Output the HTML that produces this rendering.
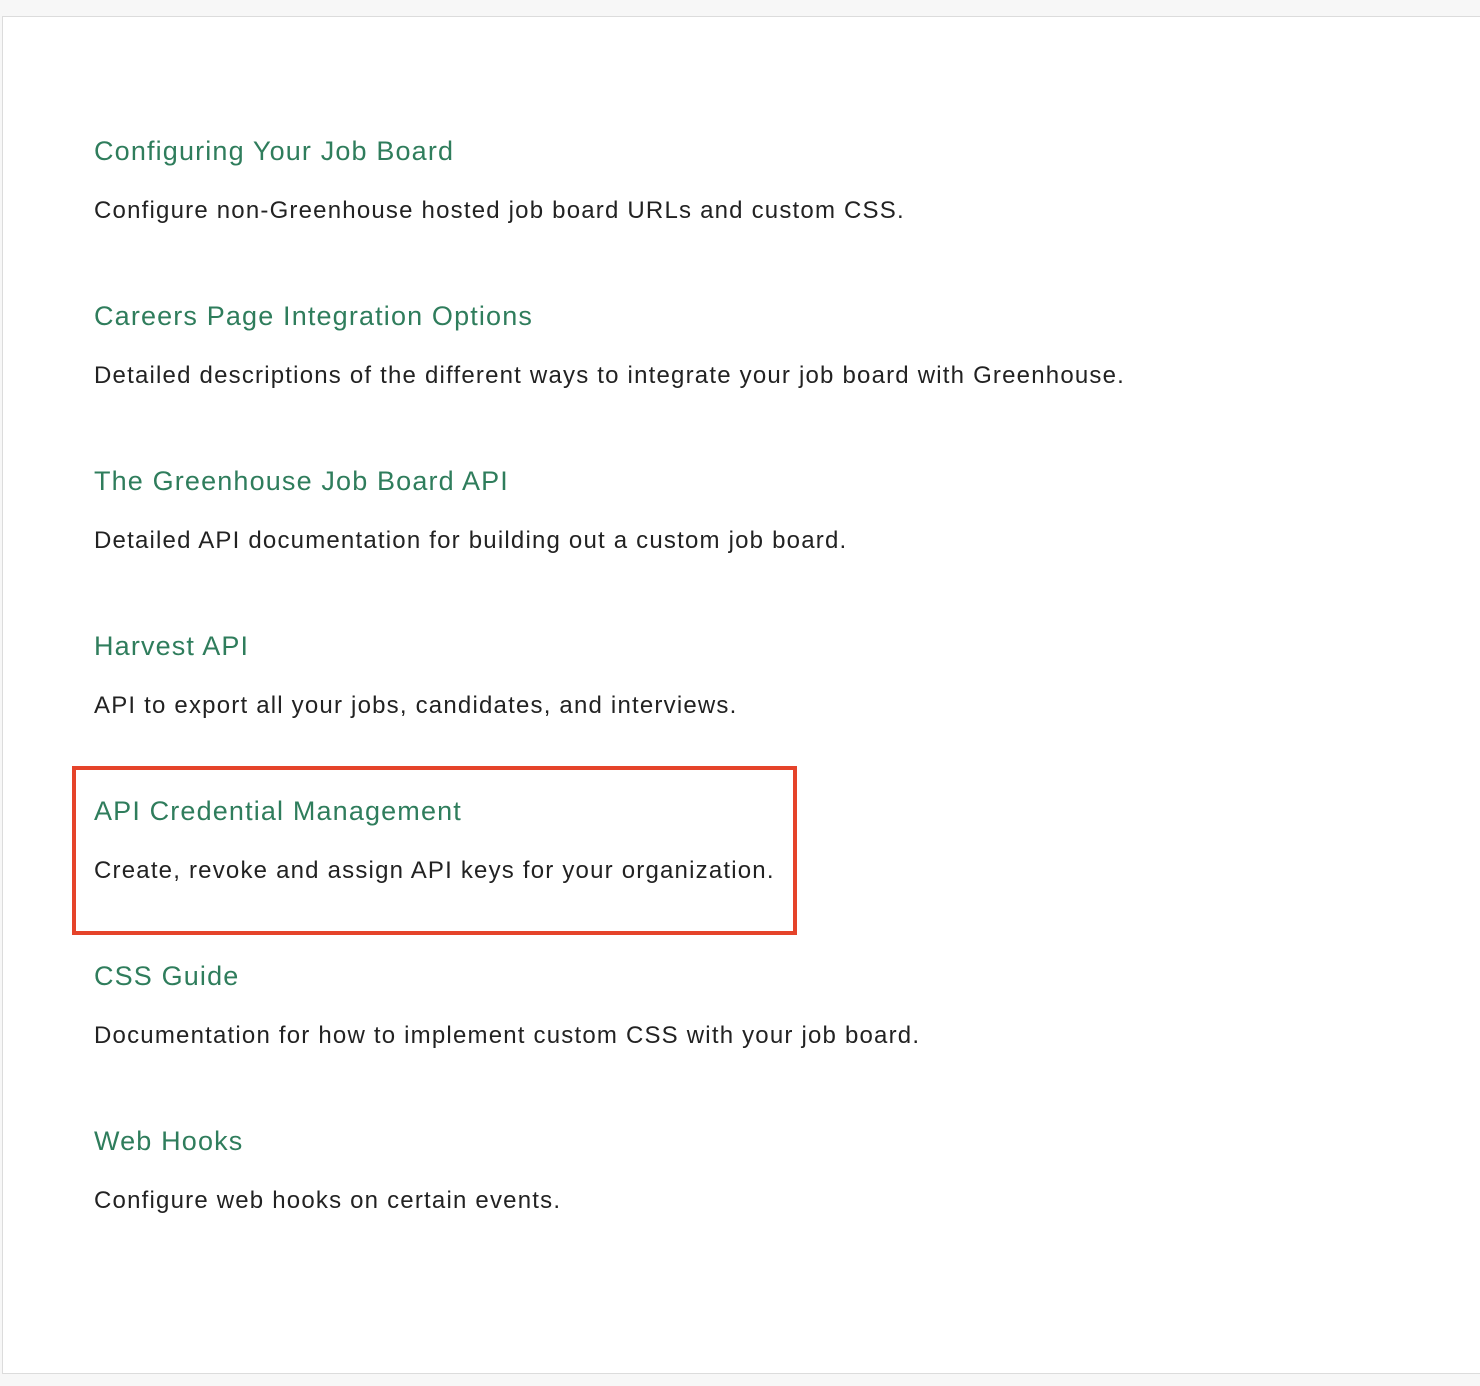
<!DOCTYPE html>
<html><head><meta charset="utf-8"><style>
html,body{margin:0;padding:0;background:#f7f7f7;width:1480px;height:1386px;overflow:hidden;}
.panel{position:absolute;left:2px;top:16px;width:1500px;height:1356px;background:#fff;border:1px solid #dcdcdc;border-right:none;}
.t{position:absolute;left:94px;font-family:"Liberation Sans",sans-serif;font-size:27px;line-height:27px;color:#2f7d5c;white-space:nowrap;letter-spacing:1.15px;}
.d{position:absolute;left:94px;font-family:"Liberation Sans",sans-serif;font-size:24px;line-height:24px;color:#222;white-space:nowrap;letter-spacing:1.2px;}
.box{position:absolute;left:72px;top:766px;width:717px;height:161px;border:4px solid #e5432a;}
</style></head><body>
<div class="panel"></div>
<div class="t" style="top:138px">Configuring Your Job Board</div>
<div class="d" style="top:199px">Configure non-Greenhouse hosted job board URLs and custom CSS.</div>
<div class="t" style="top:303px">Careers Page Integration Options</div>
<div class="d" style="top:364px">Detailed descriptions of the different ways to integrate your job board with Greenhouse.</div>
<div class="t" style="top:468px">The Greenhouse Job Board API</div>
<div class="d" style="top:529px">Detailed API documentation for building out a custom job board.</div>
<div class="t" style="top:633px">Harvest API</div>
<div class="d" style="top:694px">API to export all your jobs, candidates, and interviews.</div>
<div class="t" style="top:798px">API Credential Management</div>
<div class="d" style="top:859px">Create, revoke and assign API keys for your organization.</div>
<div class="t" style="top:963px">CSS Guide</div>
<div class="d" style="top:1024px">Documentation for how to implement custom CSS with your job board.</div>
<div class="t" style="top:1128px">Web Hooks</div>
<div class="d" style="top:1189px">Configure web hooks on certain events.</div>
<div class="box"></div>
</body></html>
